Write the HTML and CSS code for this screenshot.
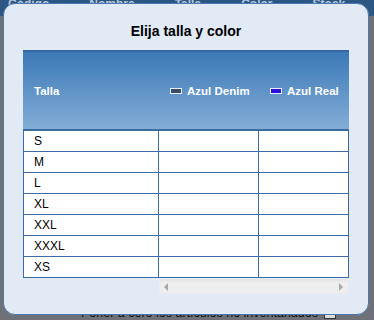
FILE: index.html
```html
<!DOCTYPE html>
<html lang="es">
<head>
    <meta charset="UTF-8">
    <meta name="viewport" content="width=device-width, initial-scale=1.0">
    <title>Elija talla y color</title>
    <link rel="stylesheet" href="styles.css">
</head>
<body>
    <div class="backdrop">
        <div class="list-head">
            <span>Código</span><span>Nombre</span><span>Talla</span><span>Color</span><span>Stock</span><span>Unid.</span><span>Descuento</span>
        </div>
        <div class="list-body"></div>
        <div class="list-foot">
            <span>Poner a cero los artículos no inventariados</span>
            <span class="check"></span>
        </div>
    </div>

    <div class="dialog">
        <h1>Elija talla y color</h1>
        <div class="grid">
            <div class="grid-head">
                <div class="hcell">Talla</div>
                <div class="hcell"><span class="swatch denim"></span>Azul Denim</div>
                <div class="hcell"><span class="swatch real"></span>Azul Real</div>
            </div>
            <div class="grid-row first"><div class="cell">S</div><div class="cell"></div><div class="cell"></div></div>
            <div class="grid-row"><div class="cell">M</div><div class="cell"></div><div class="cell"></div></div>
            <div class="grid-row"><div class="cell">L</div><div class="cell"></div><div class="cell"></div></div>
            <div class="grid-row"><div class="cell">XL</div><div class="cell"></div><div class="cell"></div></div>
            <div class="grid-row"><div class="cell">XXL</div><div class="cell"></div><div class="cell"></div></div>
            <div class="grid-row"><div class="cell">XXXL</div><div class="cell"></div><div class="cell"></div></div>
            <div class="grid-row"><div class="cell">XS</div><div class="cell"></div><div class="cell"></div></div>
        </div>
        <div class="hscroll">
            <span class="arrow left"></span>
            <span class="arrow right"></span>
        </div>
    </div>
</body>
</html>
```

FILE: styles.css
```css
* { box-sizing: border-box; }
body {
    margin: 0; font-family: 'Liberation Sans', Arial, sans-serif;
    background: #6e7178; overflow: hidden;
}
.backdrop { height: 320px; display: flex; flex-direction: column; }
.list-head {
    height: 16px; background: #2c5784; color: #b9c8da; font-size: 12px; font-weight: bold;
    display: flex; gap: 40px; padding-left: 8px; line-height: 8px; overflow: hidden;
}
.list-body { flex: 1; }
.list-foot {
    height: 14px; display: flex; align-items: flex-start; gap: 6px;
    padding-left: 81px; font-size: 12.5px; line-height: 14px; color: #111;
}
.check { width: 12px; height: 12px; border: 1px solid #333; background: #ddd; margin-top: 1px; }

.dialog {
    position: absolute; left: 3px; top: 3px; width: 366px; height: 312px;
    background: #e1eaf5; border: 1px solid #4a78ae; border-radius: 12px;
    padding-top: 19px;
}
h1 {
    margin: 0 0 10px; text-align: center; font-size: 14px; line-height: 17px;
    font-weight: bold; color: #000;
}
.grid { width: 326px; margin-left: 19px; }
.grid-head {
    display: grid; grid-template-columns: 136px 100px 90px; height: 79px;
    border-top: 2px solid #3667a0;
    background: linear-gradient(to bottom, #3c79b7 0%, #83add7 100%);
}
.hcell {
    display: flex; align-items: center; padding-left: 11px;
    color: #fff; font-size: 11.5px; font-weight: bold; white-space: nowrap;
}
.swatch {
    display: inline-block; width: 12px; height: 6px; border: 1px solid #e8eef6;
    margin-right: 5px;
}
.swatch.denim { background: #3b4d66; }
.swatch.real { background: #2b0fe0; }
.grid-row {
    display: grid; grid-template-columns: 135px 100px 90px; height: 21px;
    background: #fff; border-left: 1px solid #3a6ca3; border-bottom: 1px solid #3a6ca3;
}
.grid-row.first { height: 23px; border-top: 2px solid #3a6ca3; }
.cell {
    border-right: 1px solid #3a6ca3; padding-left: 10px;
    font-size: 12px; line-height: 20px; color: #000;
}
.hscroll {
    position: relative; width: 189px; height: 15px; margin: 1px 0 0 155px;
    background: linear-gradient(to bottom, #e4e4e4 0%, #eeeeee 30%, #ececec 100%);
}
.arrow {
    position: absolute; top: 4px; width: 0; height: 0;
    border-top: 4px solid transparent; border-bottom: 4px solid transparent;
}
.arrow.left { left: 5px; border-right: 4px solid #a8a8a8; }
.arrow.right { right: 5px; border-left: 4px solid #a8a8a8; }
```
